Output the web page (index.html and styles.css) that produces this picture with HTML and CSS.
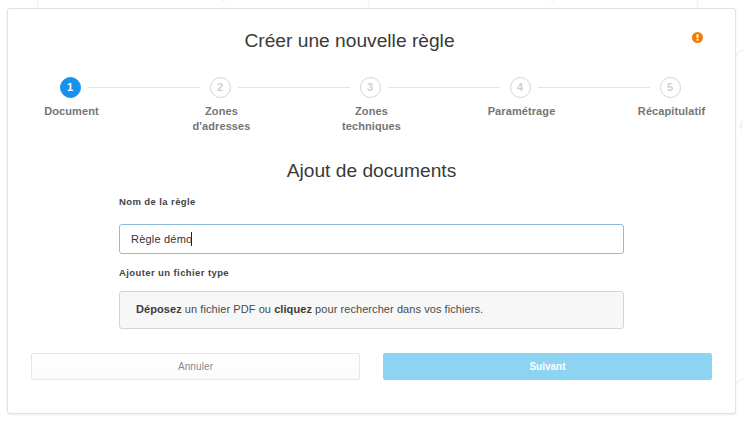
FILE: index.html
```html
<!DOCTYPE html>
<html lang="fr">
<head>
<meta charset="utf-8">
<title>Créer une nouvelle règle</title>
<link rel="stylesheet" href="styles.css">
</head>
<body>
<svg class="backdrop" width="744" height="427" viewBox="0 0 744 427" fill="none" stroke="#f3f3f3" stroke-width="1.5">
  <path d="M37 0l1 8M368 0l1 8M697 0l1 8M222 0q1.500 1.500 3 0M551 0q1.500 1.500 3 0"/>
  <path d="M737 56q0-6 7-6M737 385q0-6 7-6"/>
  <path d="M6 118v8" stroke="#f8f8f8"/>
  <path d="M741 120l-2 8h2l-1 7 3-9h-2l2-6z" fill="#f3f3f3" stroke="none"/>
</svg>
<main class="modal">
  <header class="modal-head">
    <h1 class="title">Créer une nouvelle règle</h1>
    <svg class="alert" width="11" height="11" viewBox="0 0 11 11"><circle cx="5.500" cy="5.500" r="5.500" fill="#f57c00"/><rect x="4.500" y="2.200" width="2" height="4" rx=".6" fill="#fff"/><rect x="4.500" y="7" width="2" height="1.800" rx=".6" fill="#fff"/></svg>
  </header>
  <ol class="steps">
    <li class="step active"><span class="dot">1</span><span class="step-label">Document</span></li>
    <li class="step"><span class="dot">2</span><span class="step-label">Zones d'adresses</span></li>
    <li class="step"><span class="dot">3</span><span class="step-label">Zones techniques</span></li>
    <li class="step"><span class="dot">4</span><span class="step-label">Paramétrage</span></li>
    <li class="step"><span class="dot">5</span><span class="step-label">Récapitulatif</span></li>
  </ol>
  <h2 class="subtitle">Ajout de documents</h2>
  <form class="form">
    <div class="field-label first">Nom de la règle</div>
    <div class="input"><span>Règle démo</span><i class="caret"></i></div>
    <div class="field-label second">Ajouter un fichier type</div>
    <div class="drop"><b>Déposez</b> un fichier PDF ou <b>cliquez</b> pour rechercher dans vos fichiers.</div>
  </form>
  <footer class="actions">
    <div class="btn cancel">Annuler</div>
    <div class="btn next">Suivant</div>
  </footer>
</main>
</body>
</html>
```
FILE: styles.css
```css
* { box-sizing: border-box; }
html, body { margin: 0; height: 100%; overflow: hidden; background: #fff; }
body { position: relative; padding: 8px 8px 0 7px; font-family: "Liberation Sans", sans-serif; color: #333; }
.backdrop { position: absolute; left: 0; top: 0; }
.modal {
  position: relative;
  width: 729px; height: 406px; background: #fff;
  border: 1px solid #e2e2e2; border-radius: 3px;
  box-shadow: 0 1px 2px rgba(0,0,0,.08);
  display: flex; flex-direction: column;
}
.modal-head { position: relative; height: 68px; }
.title {
  margin: 0 44px 0 0; padding-top: 20px; text-align: center;
  font: 400 19.2px/24px "Liberation Sans", sans-serif; color: #3a3a3a;
}
.alert { position: absolute; left: 684px; top: 23px; }
.steps {
  list-style: none; margin: 0 0 0 12px; padding: 0;
  display: flex; gap: 50px; height: 82px; width: 700px;
}
.step { position: relative; width: 100px; display: flex; flex-direction: column; align-items: center; }
.step + .step::before {
  content: ""; position: absolute; left: -82px; top: 9.500px;
  width: 112px; height: 1px; background: #e4e4e4;
}
.dot {
  width: 21px; height: 21px; border-radius: 50%;
  border: 1px solid #d4d4d4; color: #d0d0d0;
  font: 700 11px/19px "Liberation Sans", sans-serif; text-align: center;
}
.active .dot { background: #1492ee; border-color: #1492ee; color: #fff; }
.step-label {
  margin: 6px 0 0 3px; width: 80px; text-align: center;
  font: 700 11px/15px "Liberation Sans", sans-serif; letter-spacing: .1px; color: #757575;
}
.subtitle {
  margin: 0; text-align: center;
  font: 400 19.2px/24px "Liberation Sans", sans-serif; color: #3a3a3a;
}
.form { margin-left: 111px; width: 505px; }
.field-label { font: 700 9.500px/12px "Liberation Sans", sans-serif; letter-spacing: .4px; color: #444; }
.first { margin-top: 13px; }
.second { margin-top: 13px; }
.input {
  margin-top: 16px; height: 30px; padding: 0 11px;
  border: 1px solid #8fbcdc; border-radius: 3px;
  display: flex; align-items: center;
  font: 400 11px/14px "Liberation Sans", sans-serif; letter-spacing: .2px; color: #333;
}
.caret { width: 1px; height: 14px; margin-left: -1px; background: #222; }
.drop {
  margin-top: 12px; height: 38px; padding: 0 16px;
  background: #f7f7f7; border: 1px solid #d4d4d4; border-radius: 3px;
  display: block;
  font: 400 11px/35px "Liberation Sans", sans-serif; letter-spacing: .07px; color: #4a4a4a;
}
.drop b { font-weight: 700; color: #3a3a3a; }
.actions { display: flex; justify-content: space-between; margin: 24px 23px 0; }
.btn {
  width: 329px; height: 27px; border-radius: 2px; text-align: center;
  font: 400 10px/25px "Liberation Sans", sans-serif; letter-spacing: .1px;
}
.cancel { border: 1px solid #e6e6e6; background: linear-gradient(#fff, #fafafa); color: #8a8a8a; }
.next { border: 1px solid #8dd3f2; background: #8dd3f2; color: #fff; font-weight: 700; letter-spacing: 0; }
```
